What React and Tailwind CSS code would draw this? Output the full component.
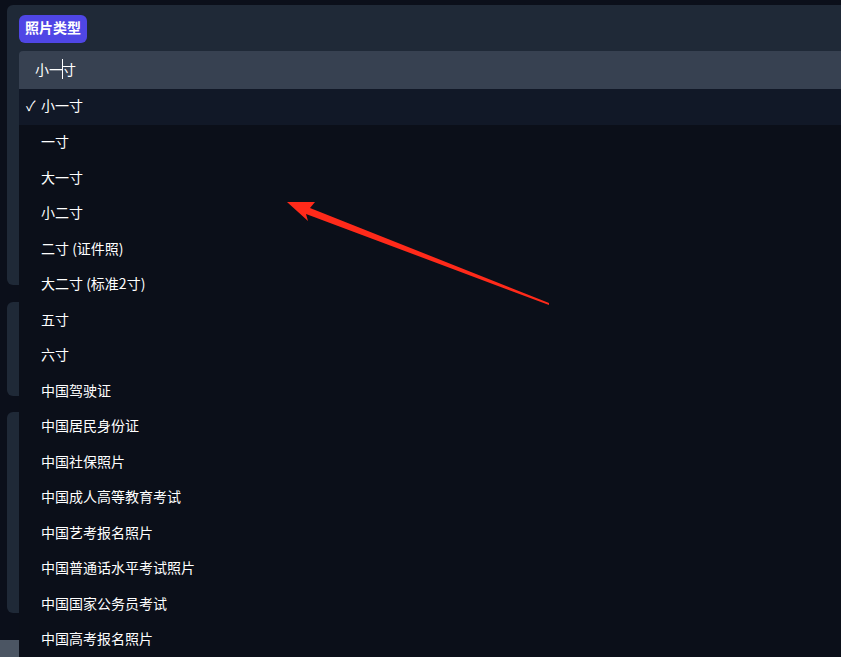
import React from 'react';

const photoTypes = [
    '一寸',
    '大一寸',
    '小二寸',
    '二寸 (证件照)',
    '大二寸 (标准2寸)',
    '五寸',
    '六寸',
    '中国驾驶证',
    '中国居民身份证',
    '中国社保照片',
    '中国成人高等教育考试',
    '中国艺考报名照片',
    '中国普通话水平考试照片',
    '中国国家公务员考试',
    '中国高考报名照片',
];

const font = { fontFamily: '"Noto Sans CJK SC", "Noto Sans", sans-serif' };

// red annotation arrow pointing at the option list
const Arrow = () => (
    <svg className="absolute left-0 top-0 z-20 pointer-events-none" width="841" height="657" viewBox="0 0 841 657">
        <polygon
            points="287,202 315,202 310,208 549,303 549,305 306,214 308,221"
            fill="#ff2a1a"
        />
    </svg>
);

const PhotoTypeSelect = () => (
    <div className="relative w-full">
        <div className="h-[38px] rounded-t-[4px] bg-[#374151] flex items-center pl-[16px] pb-[2px] text-[14px] text-white">
            <span>小一</span>
            <span className="w-px h-[20px] bg-white -mx-[1px]" />
            <span>寸</span>
        </div>
        {/* options menu */}
        <div className="absolute left-0 top-[38px] w-[830px] z-10 bg-[#0b0f19] text-white text-[14px]">
            <div className="h-[36px] bg-[#111827] flex items-center pl-[7px] pb-[4px]">
                <span className="w-[15px]">✓</span>
                <span>小一寸</span>
            </div>
            {photoTypes.map((name) => (
                <div key={name} className="h-[35.5px] flex items-center pl-[22px] pb-[2px]">
                    {name}
                </div>
            ))}
        </div>
    </div>
);

export default function App() {
    return (
        <div className="relative w-[841px] h-[657px] overflow-hidden bg-[#0b0f1a]" style={font}>
            <div className="flex flex-col pl-[7px] pt-[5px]">
                <div className="flex flex-col items-start gap-[8px] h-[280px] w-[850px] rounded-[6px] bg-[#1f2937] px-[12px] pt-[10px]">
                    <div className="flex h-[28px] items-center rounded-[6px] bg-[#4f46e5] px-[6px] pb-[3px] text-[14px] font-bold text-white">
                        照片类型
                    </div>
                    <PhotoTypeSelect />
                </div>
                <div className="mt-[17px] h-[94px] w-[850px] rounded-[6px] bg-[#1f2937]" />
                <div className="mt-[16px] h-[201px] w-[850px] rounded-[6px] bg-[#1f2937]" />
                <div className="mt-[27px] -ml-[7px] h-[40px] w-[860px] bg-[#4b5563]" />
            </div>
            <Arrow />
        </div>
    );
}
